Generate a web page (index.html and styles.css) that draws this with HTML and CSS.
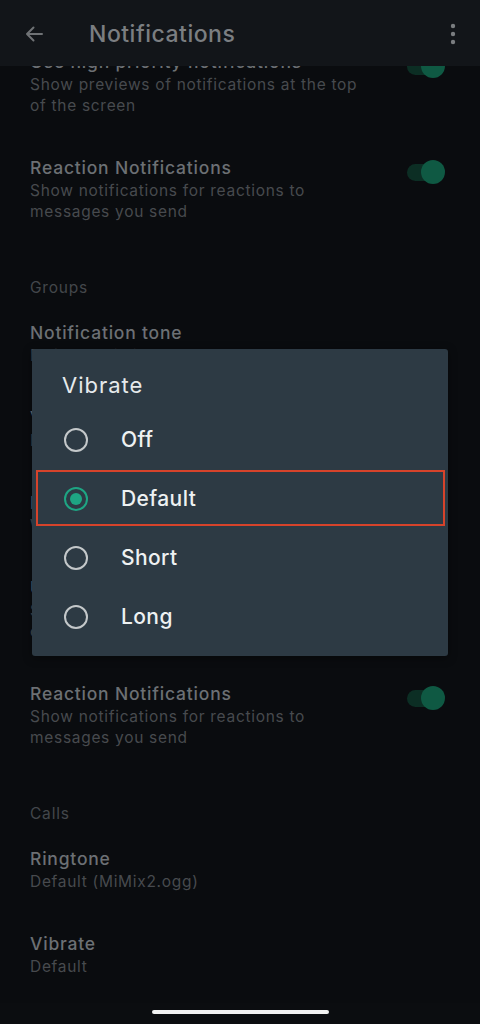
FILE: index.html
```html
<!DOCTYPE html>
<html lang="en">
<head>
<meta charset="utf-8">
<title>Notifications</title>
<link rel="stylesheet" href="styles.css">
</head>
<body>
<div class="screen">
  <header class="appbar">
    <svg class="back" width="24" height="24" viewBox="0 0 24 24"><path d="M20 12H5M11.5 5.5L5 12l6.5 6.5" fill="none" stroke="currentColor" stroke-width="2" stroke-linecap="round" stroke-linejoin="round"/></svg>
    <h1 class="title">Notifications</h1>
    <svg class="more" width="6" height="22" viewBox="0 0 6 22"><circle cx="3" cy="3" r="2.2"/><circle cx="3" cy="11" r="2.2"/><circle cx="3" cy="19" r="2.2"/></svg>
  </header>

  <main class="content">
    <div class="list">
      <div class="item">
        <div class="text">
          <div class="item-title">Use high priority notifications</div>
          <div class="item-sub">Show previews of notifications at the top of the screen</div>
        </div>
        <span class="toggle"><span class="thumb"></span></span>
      </div>
      <div class="item">
        <div class="text">
          <div class="item-title">Reaction Notifications</div>
          <div class="item-sub">Show notifications for reactions to messages you send</div>
        </div>
        <span class="toggle"><span class="thumb"></span></span>
      </div>

      <div class="section">Groups</div>
      <div class="item">
        <div class="text">
          <div class="item-title">Notification tone</div>
          <div class="item-sub">Default (MiMix2.ogg)</div>
        </div>
      </div>
      <div class="item">
        <div class="text">
          <div class="item-title">Vibrate</div>
          <div class="item-sub">Default</div>
        </div>
      </div>
      <div class="item">
        <div class="text">
          <div class="item-title">Light</div>
          <div class="item-sub">White</div>
        </div>
      </div>
      <div class="item">
        <div class="text">
          <div class="item-title">Use high priority notifications</div>
          <div class="item-sub">Show previews of notifications at the top of the screen</div>
        </div>
        <span class="toggle"><span class="thumb"></span></span>
      </div>
      <div class="item">
        <div class="text">
          <div class="item-title">Reaction Notifications</div>
          <div class="item-sub">Show notifications for reactions to messages you send</div>
        </div>
        <span class="toggle"><span class="thumb"></span></span>
      </div>

      <div class="section">Calls</div>
      <div class="item">
        <div class="text">
          <div class="item-title">Ringtone</div>
          <div class="item-sub">Default (MiMix2.ogg)</div>
        </div>
      </div>
      <div class="item">
        <div class="text">
          <div class="item-title">Vibrate</div>
          <div class="item-sub">Default</div>
        </div>
      </div>
    </div>
  </main>

  <div class="navbar"><span class="home"></span></div>

  <div class="dialog" role="dialog">
    <div class="dialog-title">Vibrate</div>
    <div class="option"><span class="radio"></span><span class="label">Off</span></div>
    <div class="option selected"><span class="radio"></span><span class="label">Default</span></div>
    <div class="option"><span class="radio"></span><span class="label">Short</span></div>
    <div class="option"><span class="radio"></span><span class="label">Long</span></div>
  </div>
</div>
</body>
</html>
```

FILE: styles.css
```css
* { box-sizing: border-box; margin: 0; padding: 0; }

html, body {
  width: 480px;
  height: 1024px;
  background: #0a0c0f;
  overflow: hidden;
}

body {
  font-family: Inter, "Noto Sans", sans-serif;
}

.screen {
  position: relative;
  width: 480px;
  height: 1024px;
  display: flex;
  flex-direction: column;
}

.appbar {
  height: 66px;
  flex: none;
  background: #121519;
  display: flex;
  align-items: center;
  padding: 2px 24px 0 22px;
  color: #6f7275;
  position: relative;
  z-index: 1;
}

.back { flex: none; }

.title {
  flex: 1;
  margin-left: 43px;
  font-size: 23px;
  font-weight: 500;
  color: #7b7e81;
  letter-spacing: 0.5px;
}

.more { fill: #7a7d80; flex: none; }

.content {
  flex: 1;
  overflow: hidden;
}

.list {
  margin-top: -36px;
}

.item {
  display: flex;
  align-items: flex-start;
  gap: 40px;
  padding: 20.5px 35px 20.5px 30px;
}

.text { flex: 1; min-width: 0; }

.item-title {
  font-size: 17.5px;
  line-height: 22px;
  font-weight: 500;
  color: #6c7074;
  letter-spacing: 0.8px;
}

.item-sub {
  margin-top: 1px;
  font-size: 15.5px;
  line-height: 21px;
  color: #474a4e;
  letter-spacing: 0.7px;
}

.toggle {
  flex: none;
  position: relative;
  width: 40px;
  height: 24px;
  margin-top: 3px;
}

.toggle::before {
  content: "";
  position: absolute;
  left: 2px;
  top: 4px;
  width: 34px;
  height: 17px;
  border-radius: 9px;
  background: #0c2e24;
}

.thumb {
  position: absolute;
  right: 0;
  top: 0;
  width: 24px;
  height: 24px;
  border-radius: 50%;
  background: #0f5943;
}

.section {
  padding: 36px 30px 3px;
  font-size: 15.5px;
  line-height: 20px;
  color: #43474b;
  letter-spacing: 0.8px;
}

.navbar {
  height: 21px;
  flex: none;
  background: #0b0d10;
  display: flex;
  justify-content: center;
  padding-top: 7px;
}

.home {
  width: 177px;
  height: 4px;
  border-radius: 2px;
  background: #f2f2f2;
}

.dialog {
  position: absolute;
  left: 32px;
  top: 349px;
  width: 416px;
  background: #2d3a44;
  border-radius: 3px;
  padding: 22px 0 10px;
  box-shadow: 0 2px 10px rgba(0, 0, 0, 0.4);
}

.dialog-title {
  padding: 0 30px;
  font-size: 22px;
  line-height: 28px;
  color: #e6eaec;
  letter-spacing: 1px;
  margin-bottom: 11px;
}

.option {
  position: relative;
  height: 59px;
  display: flex;
  align-items: center;
  padding-left: 32px;
  gap: 33px;
}

.radio {
  flex: none;
  width: 24px;
  height: 24px;
  border-radius: 50%;
  border: 2px solid #c4c8ca;
  position: relative;
}

.label {
  font-size: 21px;
  font-weight: 500;
  color: #eef1f2;
  letter-spacing: 0.4px;
}

.selected .radio {
  border-color: #1ea583;
}

.selected .radio::after {
  content: "";
  position: absolute;
  left: 4px;
  top: 4px;
  width: 12px;
  height: 12px;
  border-radius: 50%;
  background: #1ea583;
}

.selected::after {
  content: "";
  position: absolute;
  left: 4px;
  right: 3px;
  top: 1px;
  bottom: 2px;
  border: 2px solid #d6432b;
}
```
